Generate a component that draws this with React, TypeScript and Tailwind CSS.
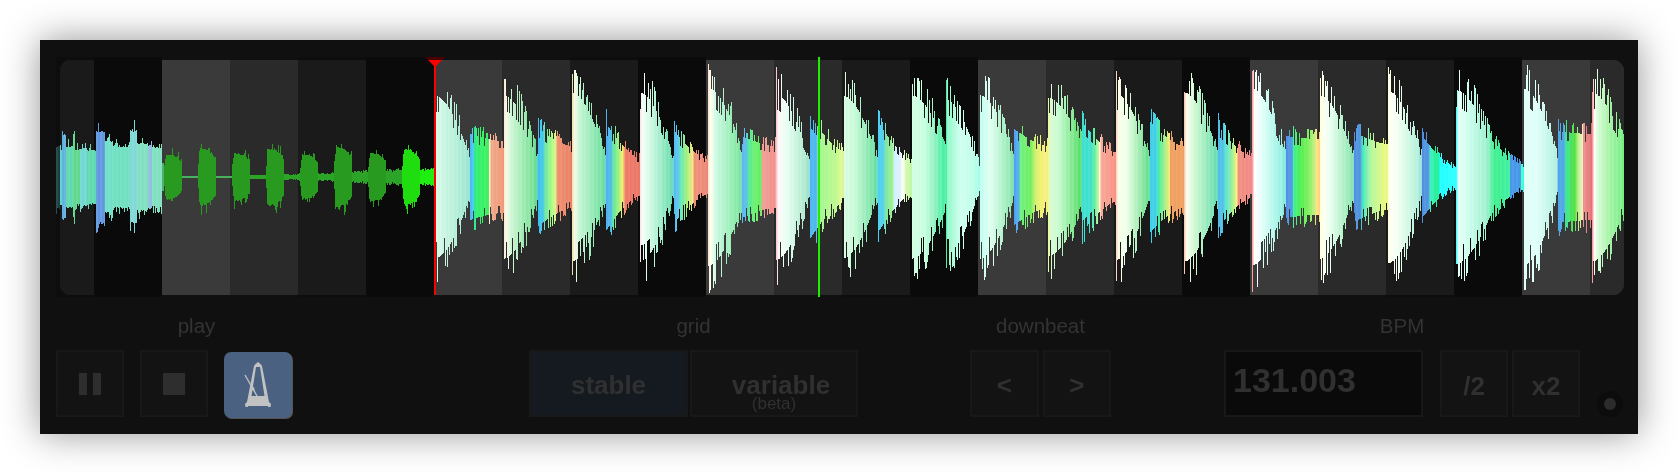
import type { ReactNode } from "react";

type Stop = [number, string];
type Beat = { k: number; d: number; m: number; e: number; big?: boolean; stops: Stop[] };
type Column = { x: number; top: number; bottom: number; fill: string };

const W = 1568;
const H = 240;
const CX = 56;
const CY = 57;
const MID = 177;

// seeded, so the wave is the same on every load
let seed = 1337;
const rnd = () => {
  seed = (seed + 0x6d2b79f5) | 0;
  let t = Math.imul(seed ^ (seed >>> 15), 1 | seed);
  t = (t + Math.imul(t ^ (t >>> 7), 61 | t)) ^ t;
  return ((t ^ (t >>> 14)) >>> 0) / 4294967296;
};

const hexToRgb = (hex: string) => [
  parseInt(hex.slice(1, 3), 16),
  parseInt(hex.slice(3, 5), 16),
  parseInt(hex.slice(5, 7), 16),
];

const mix = (a: string, b: string, f: number) => {
  const ca = hexToRgb(a);
  const cb = hexToRgb(b);
  const c = ca.map((v, i) => Math.round(v + (cb[i] - v) * f));
  return `rgb(${c[0]},${c[1]},${c[2]})`;
};

const toHex = (rgb: string) => {
  const n = rgb.match(/\d+/g) as string[];
  return "#" + n.map((v) => Number(v).toString(16).padStart(2, "0")).join("");
};

const colorAt = (stops: Stop[], t: number) => {
  for (let i = 1; i < stops.length; i++) {
    if (t <= stops[i][0]) {
      const [t0, c0] = stops[i - 1];
      const [t1, c1] = stops[i];
      return toHex(mix(c0, c1, t1 === t0 ? 1 : (t - t0) / (t1 - t0)));
    }
  }
  return stops[stops.length - 1][1];
};

const beats: Beat[] = [
  { k: 107, d: 17, m: 42, e: 35, stops: [[0, "#d8fae8"], [30, "#a0e8d0"], [33, "#90e0e0"], [34, "#50b8f0"], [37, "#40d0f0"], [39, "#30f070"], [52, "#40f060"], [53, "#fff0d0"], [55, "#f0a888"], [68, "#f09878"]] },
  { k: 108, d: 20, m: 48, e: 30, stops: [[0, "#ffe8d0"], [2, "#f0fce8"], [8, "#c8f4d0"], [30, "#70e090"], [33, "#50d0b0"], [34, "#40c0f0"], [38, "#40c8f0"], [41, "#70e8a0"], [48, "#b0ff80"], [51, "#e0f090"], [53, "#f09070"], [68, "#e88068"]] },
  { k: 112, d: 18, m: 52, e: 18, stops: [[0, "#f8d8a0"], [2, "#f0fce8"], [8, "#c0f4d0"], [30, "#70e0a0"], [33, "#60d0c0"], [34, "#50b0f0"], [38, "#50b8f0"], [41, "#60e8a0"], [46, "#a0f080"], [50, "#f0f070"], [53, "#f07868"], [68, "#e87868"]] },
  { k: 112, d: 17, m: 45, e: 17, stops: [[0, "#ffe0e8"], [2, "#f4fff8"], [8, "#d8fbe8"], [30, "#70e0b0"], [33, "#60d0d0"], [34, "#50c0f0"], [37, "#60c0f0"], [40, "#60e8c0"], [46, "#a0f080"], [52, "#f0e880"], [54, "#f09078"], [68, "#e88878"]] },
  { k: 118, d: 27, m: 40, e: 30, stops: [[0, "#ffe0c8"], [2, "#fffff0"], [8, "#c8f8e0"], [30, "#80e8a0"], [33, "#70d8b0"], [34, "#60b8f0"], [37, "#60b8f0"], [40, "#50e8a0"], [46, "#70f070"], [52, "#60f060"], [54, "#f0a098"], [66, "#f09088"], [68, "#ffc0c0"]] },
  { k: 110, d: 14, m: 60, e: 25, stops: [[0, "#ffc0c8"], [2, "#fff8f8"], [10, "#e8fff4"], [30, "#a8e8c8"], [33, "#90d8e0"], [34, "#50b8f0"], [40, "#50b8f0"], [42, "#a0f890"], [60, "#c0f890"], [64, "#e0f890"], [68, "#d0f8a0"]] },
  { k: 107, d: 17, m: 54, e: 17, stops: [[0, "#d8fbe0"], [10, "#c8fad8"], [30, "#70e0a0"], [33, "#60d8c0"], [34, "#50d0f0"], [38, "#50d0f0"], [42, "#80e8a0"], [48, "#a0f090"], [50, "#d0f0ff"], [56, "#e0f0ff"], [58, "#fffff0"], [62, "#d0f8b0"], [68, "#c0f8a0"]] },
  { k: 108, d: 30, m: 76, e: 10, big: true, stops: [[0, "#d0ffe0"], [12, "#c8ffe0"], [22, "#90f0c0"], [32, "#40f0a0"], [34, "#50f0a0"], [35, "#90f8c8"], [48, "#d0fff0"], [60, "#c0ffe8"], [68, "#a0ffe8"]] },
  { k: 108, d: 20, m: 47, e: 30, stops: [[0, "#c0fff0"], [10, "#e0fff0"], [30, "#90e8b0"], [33, "#70d8b0"], [34, "#50a0f0"], [38, "#50b0f0"], [40, "#70f080"], [50, "#70f060"], [55, "#d0f070"], [60, "#f0f070"], [66, "#f8f080"], [68, "#f0f080"]] },
  { k: 105, d: 32, m: 54, e: 24, stops: [[0, "#e8f890"], [2, "#d8fbd0"], [10, "#c8fbd0"], [30, "#60e070"], [33, "#50e080"], [34, "#40e0d0"], [42, "#40e0d0"], [46, "#60f0a0"], [50, "#c0f8a0"], [51, "#fff8e0"], [53, "#f8a898"], [68, "#f89080"]] },
  { k: 110, d: 17, m: 54, e: 30, stops: [[0, "#ffd0c0"], [2, "#f8ffe8"], [10, "#f0ffe8"], [30, "#70e090"], [33, "#60e0a0"], [34, "#40d0e8"], [39, "#40d0e8"], [43, "#50f0a0"], [50, "#c0f080"], [53, "#f8e878"], [54, "#f0a060"], [68, "#f0a060"]] },
  { k: 112, d: 24, m: 50, e: 20, stops: [[0, "#ffc0a8"], [2, "#f8fff0"], [10, "#d0f8d0"], [30, "#70e0b0"], [33, "#60d8c0"], [34, "#50c0e8"], [38, "#50c0e8"], [42, "#60e8d0"], [48, "#a0f090"], [52, "#f8f080"], [54, "#f09080"], [68, "#f08888"]] },
  { k: 117, d: 20, m: 40, e: 37, stops: [[0, "#ff9898"], [2, "#ffffff"], [10, "#e0fff8"], [30, "#90f0e0"], [33, "#80e0e0"], [34, "#5090e8"], [40, "#50a0e8"], [41, "#40f090"], [48, "#50f050"], [56, "#80f060"], [62, "#c0f080"], [64, "#ffe080"], [68, "#ffd080"]] },
  { k: 108, d: 17, m: 44, e: 32, stops: [[0, "#ffffd0"], [2, "#fffff0"], [10, "#e8fff0"], [30, "#90e8b0"], [33, "#80d8c0"], [34, "#5090e0"], [40, "#5098e0"], [42, "#40e8c0"], [50, "#b0f8a0"], [64, "#e8f880"], [68, "#e8f880"]] },
  { k: 114, d: 20, m: 40, e: 10, stops: [[0, "#ffffd0"], [2, "#fffff8"], [10, "#f0fff0"], [30, "#b0f0d8"], [33, "#90d8e0"], [34, "#5090e0"], [40, "#5098e0"], [42, "#40f0c0"], [49, "#20f090"], [52, "#20ffff"], [68, "#30ffff"]] },
  { k: 115, d: 38, m: 38, e: 12, stops: [[0, "#30ffff"], [2, "#e8fff8"], [10, "#d0fff0"], [30, "#a0f0d0"], [38, "#40f090"], [53, "#40f0a0"], [54, "#4898e8"], [64, "#4898e8"], [65, "#40ffd0"], [68, "#40ffd0"]] },
  { k: 117, d: 15, m: 45, e: 42, stops: [[0, "#e0fff8"], [12, "#e0fff8"], [32, "#b0f0e0"], [34, "#50a8e8"], [39, "#50a8e8"], [42, "#40e890"], [50, "#50e040"], [54, "#c0f090"], [58, "#f0f0c0"], [59, "#f09090"], [68, "#e07070"]] },
  { k: 112, d: 26, m: 30, e: 30, stops: [[0, "#ff9090"], [2, "#ffffff"], [5, "#d8fcd8"], [16, "#a8f4a8"], [32, "#70ee80"], [68, "#70ee80"]] },
];

// low level intro in front of the first bursts: [from, to, amp, colour]
const intro: [number, number, number, string][] = [
  [56, 60, 33, "#1a4040"],
  [60, 62, 30, "#60cccc"],
  [62, 66, 45, "#60b0e0"],
  [66, 73, 33, "#60d8b0"],
  [73, 75, 44, "#60d890"],
  [75, 80, 29, "#60d890"],
  [80, 87, 31, "#70d8d0"],
  [87, 96, 29, "#60d8b0"],
  [96, 105, 49, "#6098e0"],
  [105, 113, 38, "#70e0c8"],
  [113, 130, 33, "#70e0c0"],
  [130, 137, 50, "#80d8d8"],
  [137, 148, 36, "#80e0c0"],
  [148, 152, 34, "#90c0e0"],
  [152, 162, 32, "#80e0c0"],
];

const bursts = [30, 38, 32, 38, 30, 40, 33, 37];
const gaps = [1, 1, 2, 3, 4, 6, 8, 9];

const buildColumns = () => {
  const cols: Column[] = [];

  intro.forEach(([from, to, amp, color]) => {
    for (let x = from; x < to; x++) {
      const jag = () => amp * (0.9 + rnd() * 0.28 * (rnd() > 0.6 ? 1 : 0.2));
      const fill = x % 4 < 2 ? toHex(mix(color, "#ffffff", 0.07)) : color;
      cols.push({ x, top: jag(), bottom: jag(), fill });
    }
  });

  for (let x = 162; x < 436; x++) {
    const i = Math.min(7, Math.floor((x - 164) / 34));
    const t = x - 164 - i * 34;
    const fill = i === 7 ? "#20dd10" : "#289a20";
    const line = gaps[i];
    if (x < 164) {
      cols.push({ x, top: 14, bottom: 14, fill: "#50b070" });
    } else if (t < 18) {
      const peak = bursts[i] * 0.78;
      const env = Math.min(1, (t + 1) / 2.5) * (1 - Math.pow(t / 18, 3) * 0.4);
      const jag = () => peak * env * (0.92 + rnd() * 0.38 * (rnd() > 0.6 ? 1 : 0.15));
      cols.push({ x, top: jag(), bottom: jag(), fill });
    } else {
      const lift = t - 18 > 10 ? 1 : 0.85;
      const a = Math.max(1, line * lift * (0.8 + rnd() * 0.4));
      const thin = i < 2 ? "#4ab060" : i === 7 ? "#20ee10" : "#2ca428";
      cols.push({ x, top: a, bottom: a, fill: thin });
    }
  }

  for (let x = 436; x < 1624; x++) {
    const b = Math.floor((x - 436) / 68);
    const t = x - 436 - b * 68;
    const beat = beats[b];
    let body: number;
    let spike: number;
    if (t < 34) {
      body = beat.d + (beat.k * 0.74 - beat.d) * (1 - Math.pow(t / 34, 1.7));
      spike = 0.35;
    } else if (beat.big) {
      body = beat.e + (beat.m - beat.e) * (1 - Math.pow((t - 34) / 34, 1.7));
      spike = 0.3;
    } else {
      body = beat.e + (beat.m - beat.e) * Math.pow(1 - (t - 34) / 34, 1.5);
      spike = 0.32;
    }
    const jag = () => {
      const r = rnd();
      if (r < 0.36) return body * (1 + spike * (0.45 + rnd() * 0.55));
      if (r < 0.52) return body * 0.82;
      return body * 1.02;
    };
    const color = colorAt(beat.stops, t);
    const fill = x % 4 < 2 ? toHex(mix(color, "#ffffff", t < 34 ? 0.1 : 0.05)) : color;
    cols.push({ x, top: jag(), bottom: jag(), fill });
  }

  return cols;
};

const columns = buildColumns();

// beat bands, the cycle runs dark, light, mid, soft from x=94
const bandFill = ["#0a0a0a", "#3a3a3a", "#2a2a2a", "#1a1a1a"];
const bands = Array.from({ length: 24 }, (_, i) => ({ x: 94 + i * 68, fill: bandFill[i % 4] }));

const Waveform = () => (
  <svg width={W} height={H} viewBox={`${CX} ${CY} ${W} ${H}`} className="block shrink-0" shapeRendering="crispEdges">
    <defs>
      <clipPath id="rounded">
        <rect x={60} y={60} width={1564} height={235} rx={11} />
      </clipPath>
    </defs>
    {/* dark bands hang over the rounded panel by a few px */}
    <rect x={56} y={57} width={38} height={240} fill="#0d0d0d" />
    {bands
      .filter((b) => b.fill === "#0a0a0a" || b.fill === "#1a1a1a")
      .map((b) => (
        <rect key={b.x} x={b.x} y={57} width={68} height={240} fill={b.fill === "#0a0a0a" ? "#0b0b0b" : "#0d0d0d"} />
      ))}
    <rect x={60} y={60} width={1564} height={235} rx={11} fill="#2a2a2a" shapeRendering="auto" />
    <g clipPath="url(#rounded)">
      <rect x={56} y={60} width={38} height={235} fill="#1a1a1a" />
      {bands.map((b) => (
        <rect key={b.x} x={b.x} y={60} width={68} height={235} fill={b.fill} />
      ))}
    </g>
    {columns.map((c) => (
      <rect key={c.x} x={c.x} y={MID - c.top} width={1} height={c.top + c.bottom} fill={c.fill} />
    ))}
    <rect x={434} y={60} width={2} height={235} fill="#ff0000" />
    <polygon points="425,57 445,57 442,60 428,60" fill="#4a0000" shapeRendering="auto" />
    <polygon points="428,60 442,60 435,67" fill="#ff0000" shapeRendering="auto" />
    <rect x={818} y={57} width={2} height={240} fill="#20ee00" />
  </svg>
);

const Metronome = () => (
  <svg width={68} height={66} viewBox="0 0 68 66" fill="#c2c2c2">
    <path
      fillRule="evenodd"
      d="M34 10 L37 12.5 L38 14 L45 50 L47 52 L46.5 55 L44.5 55 L43.5 54 L24.5 54 L23.5 55 L21.5 55 L21 52 L23 50 L30 14 L31 12.5 Z M32 15 L27.5 44 L40.5 44 L36 15 Z"
    />
    <path d="M21 23 L33 44" stroke="#c2c2c2" strokeWidth="1.4" fill="none" />
    <path d="M27.5 33.5 L30 35.5 L31 39.5 L28 38 Z" />
  </svg>
);

const Box = ({ children, className }: { children?: ReactNode; className: string }) => (
  <div className={`flex h-[67px] items-center justify-center border-2 border-[#181818] ${className}`}>{children}</div>
);

const Label = ({ text, className }: { text: string; className?: string }) => (
  <div className={`mt-[17px] mb-[12px] h-[24px] text-center text-[20.5px] leading-[24px] font-normal text-[#333333] ${className ?? ""}`}>
    {text}
  </div>
);

export default function App() {
  return (
    <div className="h-[474px] w-[1678px] overflow-hidden bg-white p-[40px] font-['Liberation_Sans',Arial,sans-serif]">
      <div className="flex h-[394px] w-[1598px] flex-col bg-[#101010] pt-[17px] pl-[16px] shadow-[0_0_35px_rgba(0,0,0,0.42)]">
        <Waveform />

        <div className="flex text-[26px] font-bold text-[#303030] blur-[0.4px]">
          <div className="flex w-[279px] flex-col">
            <Label text="play" className="pl-[2px]" />
            <div className="flex">
              <Box className="w-[68px] gap-[6px] border-[#141c24] bg-[#131313]">
                <div className="h-[22px] w-[8px] bg-[#2e2e2e]" />
                <div className="h-[22px] w-[8px] bg-[#2e2e2e]" />
              </Box>
              <Box className="ml-[16px] w-[68px] bg-[#131313]">
                <div className="h-[22px] w-[22px] bg-[#2e2e2e]" />
              </Box>
              <div className="mt-[2px] ml-[16px] h-[66px] w-[68px] rounded-[7px] bg-[#4a6182] shadow-[1px_1px_0_#555555]">
                <Metronome />
              </div>
            </div>
          </div>

          <div className="ml-[194px] flex w-[329px] flex-col">
            <Label text="grid" />
            <div className="flex gap-[2px]">
              <Box className="w-[159px] border-[#141a20] bg-[#141a20] pt-[4px]">stable</Box>
              <div className="flex h-[67px] w-[168px] flex-col items-center border-2 border-[#181818] bg-[#131313] pt-[24px] leading-[18px]">
                <span className="pl-[14px]">variable</span>
                <span className="pt-[1px] text-[17px] font-normal">(beta)</span>
              </div>
            </div>
          </div>

          <div className="ml-[112px] flex w-[141px] flex-col">
            <Label text="downbeat" />
            <div className="flex gap-[4px]">
              <Box className="w-[68.5px] bg-[#131313] pt-[4px]">&lt;</Box>
              <Box className="w-[68.5px] bg-[#131313] pt-[4px]">&gt;</Box>
            </div>
          </div>

          <div className="ml-[113px] flex w-[356px] flex-col">
            <Label text="BPM" />
            <div className="flex">
              <Box className="w-[199px] justify-start bg-[#0a0a0a] pb-[6px] pl-[7px] text-[34px]">131.003</Box>
              <Box className="ml-[17px] w-[68px] bg-[#131313] pt-[6px]">/2</Box>
              <Box className="ml-[4px] w-[68px] bg-[#131313] pt-[6px]">x2</Box>
            </div>
          </div>

          <div className="mt-[94px] ml-[17px] flex h-[26px] w-[26px] items-center justify-center rounded-full bg-[#0c0c0c]">
            <div className="h-[12px] w-[12px] rounded-full bg-[#2c2c2c]" />
          </div>
        </div>
      </div>
    </div>
  );
}
